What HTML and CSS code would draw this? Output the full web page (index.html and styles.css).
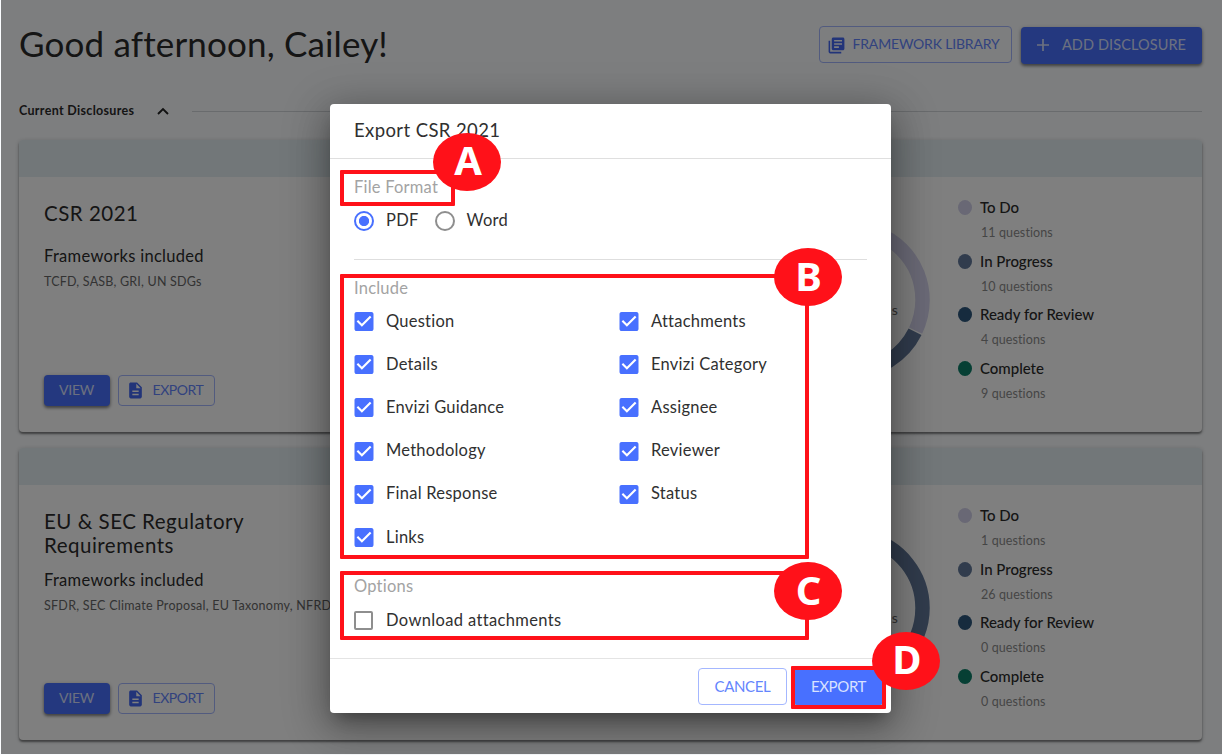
FILE: index.html
```html
<!DOCTYPE html>
<html lang="en">
<head>
<meta charset="utf-8">
<title>Disclosures</title>
<link rel="stylesheet" href="styles.css">
</head>
<body>
<svg class="defs" width="0" height="0">
  <symbol id="library" viewBox="0 0 24 24"><path d="M4 6H2v14c0 1.100.9 2 2 2h14v-2H4V6zm16-4H8c-1.100 0-2 .9-2 2v12c0 1.100.9 2 2 2h12c1.100 0 2-.9 2-2V4c0-1.100-.9-2-2-2zm-1 9H9V9h10v2zm-4 4H9v-2h6v2zm4-8H9V5h10v2z"/></symbol>
  <symbol id="doc" viewBox="0 0 24 24"><path d="M14 2H6c-1.100 0-2 .9-2 2v16c0 1.100.9 2 2 2h12c1.100 0 2-.9 2-2V8l-6-6zm2 16H8v-2h8v2zm0-4H8v-2h8v2zm-3-5V3.500L18.500 9H13z"/></symbol>
  <symbol id="check" viewBox="3 3 18 18"><path d="M19 3H5c-1.110 0-2 .9-2 2v14c0 1.100.89 2 2 2h14c1.110 0 2-.9 2-2V5c0-1.100-.89-2-2-2zm-9 14l-5-5 1.410-1.410L10 14.170l7.590-7.590L19 8l-9 9z"/></symbol>
</svg>

<main class="page">
  <header class="top">
    <h1 class="greeting">Good afternoon, Cailey!</h1>
    <button class="btn outlined library"><svg class="icon17"><use href="#library"/></svg><span>FRAMEWORK LIBRARY</span></button>
    <button class="btn filled add"><svg class="plus" viewBox="0 0 12 12"><path d="M6 0v12M0 6h12"/></svg><span>ADD DISCLOSURE</span></button>
  </header>

  <div class="section">
    <span class="section-name">Current Disclosures</span>
    <svg class="chevron" viewBox="0 0 12 8"><path d="M1 7l5-5 5 5"/></svg>
    <span class="rule"></span>
  </div>

  <section class="card">
    <div class="card-bar"></div>
    <div class="card-body">
      <div class="info">
        <h2 class="card-title">CSR 2021</h2>
        <h3 class="sub">Frameworks included</h3>
        <p class="list">TCFD, SASB, GRI, UN SDGs</p>
        <div class="actions">
          <button class="btn filled view">VIEW</button>
          <button class="btn outlined export"><svg class="icon17"><use href="#doc"/></svg><span>EXPORT</span></button>
        </div>
      </div>
      <div class="donut">
        <svg viewBox="0 0 158 158" class="ring">
          <circle class="todo" cx="79" cy="79" r="71.500" pathLength="34" stroke-dasharray="10.900 23.100"/>
          <circle class="progress" cx="79" cy="79" r="71.500" pathLength="34" stroke-dasharray="9.900 24.100" stroke-dashoffset="-11"/>
          <circle class="review" cx="79" cy="79" r="71.500" pathLength="34" stroke-dasharray="3.900 30.100" stroke-dashoffset="-21"/>
          <circle class="complete" cx="79" cy="79" r="71.500" pathLength="34" stroke-dasharray="8.900 25.100" stroke-dashoffset="-25"/>
        </svg>
        <div class="donut-text"><b>34</b><span>total questions</span></div>
      </div>
      <ul class="legend">
        <li><i class="dot todo"></i><b>To Do</b><small>11 questions</small></li>
        <li><i class="dot progress"></i><b>In Progress</b><small>10 questions</small></li>
        <li><i class="dot review"></i><b>Ready for Review</b><small>4 questions</small></li>
        <li><i class="dot complete"></i><b>Complete</b><small>9 questions</small></li>
      </ul>
    </div>
  </section>

  <section class="card">
    <div class="card-bar"></div>
    <div class="card-body">
      <div class="info">
        <h2 class="card-title">EU &amp; SEC Regulatory<br>Requirements</h2>
        <h3 class="sub">Frameworks included</h3>
        <p class="list wide">SFDR, SEC Climate Proposal, EU Taxonomy, NFRD</p>
        <div class="actions">
          <button class="btn filled view">VIEW</button>
          <button class="btn outlined export"><svg class="icon17"><use href="#doc"/></svg><span>EXPORT</span></button>
        </div>
      </div>
      <div class="donut">
        <svg viewBox="0 0 158 158" class="ring">
          <circle class="todo" cx="79" cy="79" r="71.500" pathLength="27" stroke-dasharray="0.900 26.100"/>
          <circle class="progress" cx="79" cy="79" r="71.500" pathLength="27" stroke-dasharray="25.900 1.100" stroke-dashoffset="-1"/>
        </svg>
        <div class="donut-text"><b>27</b><span>total questions</span></div>
      </div>
      <ul class="legend">
        <li><i class="dot todo"></i><b>To Do</b><small>1 questions</small></li>
        <li><i class="dot progress"></i><b>In Progress</b><small>26 questions</small></li>
        <li><i class="dot review"></i><b>Ready for Review</b><small>0 questions</small></li>
        <li><i class="dot complete"></i><b>Complete</b><small>0 questions</small></li>
      </ul>
    </div>
  </section>
</main>

<div class="backdrop"></div>

<div class="dialog" role="dialog">
  <h2 class="dialog-title">Export CSR 2021</h2>
  <div class="dialog-body">
    <h4 class="group">File Format</h4>
    <div class="radios">
      <label class="option"><i class="radio on"></i><span>PDF</span></label>
      <label class="option"><i class="radio"></i><span>Word</span></label>
    </div>
    <hr class="divider">
    <h4 class="group">Include</h4>
    <div class="checks">
      <label class="option"><svg class="box"><use href="#check"/></svg><span>Question</span></label>
      <label class="option"><svg class="box"><use href="#check"/></svg><span>Attachments</span></label>
      <label class="option"><svg class="box"><use href="#check"/></svg><span>Details</span></label>
      <label class="option"><svg class="box"><use href="#check"/></svg><span>Envizi Category</span></label>
      <label class="option"><svg class="box"><use href="#check"/></svg><span>Envizi Guidance</span></label>
      <label class="option"><svg class="box"><use href="#check"/></svg><span>Assignee</span></label>
      <label class="option"><svg class="box"><use href="#check"/></svg><span>Methodology</span></label>
      <label class="option"><svg class="box"><use href="#check"/></svg><span>Reviewer</span></label>
      <label class="option"><svg class="box"><use href="#check"/></svg><span>Final Response</span></label>
      <label class="option"><svg class="box"><use href="#check"/></svg><span>Status</span></label>
      <label class="option"><svg class="box"><use href="#check"/></svg><span>Links</span></label>
    </div>
    <h4 class="group options">Options</h4>
    <label class="option download"><i class="box empty"></i><span>Download attachments</span></label>
  </div>
  <footer class="dialog-actions">
    <button class="btn outlined big">CANCEL</button>
    <button class="btn filled big">EXPORT</button>
  </footer>
</div>

<div class="frame frame-a"></div><div class="mark mark-a">A</div>
<div class="frame frame-b"></div><div class="mark mark-b">B</div>
<div class="frame frame-c"></div><div class="mark mark-c">C</div>
<div class="frame frame-d"></div><div class="mark mark-d">D</div>
</body>
</html>
```
FILE: styles.css
```css
* { box-sizing: border-box; margin: 0; padding: 0; }
body {
  position: relative;
  width: 1222px;
  height: 755px;
  overflow: hidden;
  background: #fbfdff;
  color: #2b2b2b;
  font-family: Lato, "Open Sans", sans-serif;
}
.defs { position: absolute; }
.page { padding: 26px 20px 0 19px; }

/* Buttons */
.btn {
  display: flex;
  align-items: center;
  justify-content: center;
  border: 0;
  border-radius: 4px;
  font: 400 14px/20px Lato, "Open Sans", sans-serif;
  white-space: nowrap;
}
.filled { background: #4870ff; color: #d8e1ff; box-shadow: 0 2px 3px rgba(0,0,0,.4), 0 1px 5px rgba(0,0,0,.2); }
.outlined { background: none; border: 1px solid #a4b7ff; color: #6485fd; }
.icon17 { width: 19px; height: 19px; fill: #4469f2; }

/* Header */
.top { display: flex; height: 38px; }
.greeting { flex: 1; font-size: 35px; font-weight: 400; line-height: 35px; letter-spacing: .16px; }
.library { width: 193px; height: 37px; gap: 7px; letter-spacing: -.18px; padding: 0 5px 1px 0; }
.library .icon17 { margin-top: 2px; }
.add { width: 181px; height: 37px; margin: 1px 0 0 9px; gap: 13px; padding-bottom: 1px; font-size: 14.500px; letter-spacing: .1px; }
.plus { width: 12px; height: 12px; stroke: #d8e1ff; stroke-width: 1.700; }

/* Section heading */
.section { display: flex; align-items: center; height: 20px; margin-top: 37px; }
.section-name { width: 138px; padding-bottom: 2px; font-size: 12.500px; font-weight: 700; letter-spacing: .32px; }
.chevron { width: 12px; height: 8px; fill: none; stroke: #222; stroke-width: 1.900; }
.rule { flex: 1; height: 1px; margin-left: 23px; background: #d3d6da; }

/* Cards */
.card {
  height: 292px;
  margin-top: 19px;
  border-radius: 4px;
  overflow: hidden;
  background: #fff;
  box-shadow: 0 2px 2px rgba(0,0,0,.42), 0 1px 5px rgba(0,0,0,.2);
}
.card + .card { margin-top: 16px; }
.card-bar { height: 37px; background: #e4eef3; }
.card-body { display: flex; height: 255px; padding-left: 25px; }
.info { display: flex; flex-direction: column; width: 728px; padding: 24px 0 26px; }
.card-title { min-height: 32px; font-size: 20.500px; font-weight: 400; line-height: 24px; letter-spacing: .5px; }
.sub { margin-top: 11px; font-size: 16.500px; font-weight: 400; line-height: 24px; letter-spacing: .3px; }
.list { margin-top: 4px; color: #666; font-size: 12.500px; line-height: 20px; letter-spacing: .2px; }
.list.wide { letter-spacing: .26px; }
.actions { display: flex; gap: 8px; margin-top: auto; }
.view { width: 66px; height: 31px; padding: 0 1px 1px 0; letter-spacing: -.3px; }
.export { width: 97px; height: 31px; gap: 8px; letter-spacing: -.45px; padding: 0 4px 1px 0; }

.donut { position: relative; width: 158px; padding-top: 44px; }
.ring { display: block; width: 158px; height: 158px; transform: rotate(-90deg); fill: none; stroke-width: 14.500; }
.ring .todo { stroke: #d6d5ee; }
.ring .progress { stroke: #62799b; }
.ring .review { stroke: #2c567c; }
.ring .complete { stroke: #0c7f69; }
.donut-text { position: absolute; left: 0; top: 98px; width: 158px; text-align: center; color: #666; font-size: 14px; letter-spacing: .2px; }
.donut-text b { display: block; font-size: 24px; font-weight: 400; line-height: 26px; }
.legend { margin-left: 28px; padding-top: 20px; list-style: none; }
.legend li { display: grid; grid-template-columns: 22px auto; grid-template-rows: 22px 31.500px; align-items: center; }
.legend b { padding-bottom: 2px; font-size: 15px; font-weight: 500; line-height: 20px; letter-spacing: -.02px; }
.legend small { grid-column: 2; align-self: start; padding: 5px 0 0 1px; color: #8b8b8b; font-size: 12.500px; line-height: 18px; letter-spacing: .1px; }
.dot { width: 14px; height: 15px; margin-top: -1px; border-radius: 50%; }
.dot.todo { background: #d2d1ea; }
.dot.progress { background: #62799b; }
.dot.review { background: #2c567c; }
.dot.complete { background: #0c7f69; }

.backdrop { position: absolute; inset: 0 0 1px 1px; background: rgba(0,0,0,.5); }

/* Dialog */
.dialog {
  position: absolute;
  left: 330px;
  top: 104px;
  display: flex;
  flex-direction: column;
  width: 561px;
  height: 609px;
  border-radius: 4px;
  background: #fff;
  box-shadow: 0 11px 15px -7px rgba(0,0,0,.3), 0 12px 38px 3px rgba(0,0,0,.24), 0 9px 46px 8px rgba(0,0,0,.16);
  color: #303030;
}
.dialog-title { height: 55px; padding-left: 24px; border-bottom: 1px solid #dfdfdf; font-size: 18.500px; font-weight: 400; line-height: 52px; letter-spacing: .4px; }
.dialog-body { flex: 1; padding: 16px 24px 0; }
.group { height: 25px; color: #a3a3a3; font-size: 16.500px; font-weight: 400; line-height: 24px; letter-spacing: .22px; }
.radios { display: flex; gap: 16px; height: 42px; }
.option { display: flex; align-items: center; gap: 12px; font-size: 16.500px; letter-spacing: .24px; }
.option span { padding-bottom: 2px; }
.radio { width: 20px; height: 20px; border: 2px solid #8e8e8e; border-radius: 50%; }
.radio.on { border-color: #4870ff; background: radial-gradient(circle, #4870ff 4.700px, transparent 5.500px); }
.divider { height: 1px; margin: 17px 0 16px; border: 0; background: #dedede; }
.checks { display: grid; grid-template-columns: 265px 1fr; grid-auto-rows: 43.200px; margin-top: -1px; }
.box { width: 20px; height: 19px; fill: #4870ff; }
.box.empty { width: 19px; margin-right: 1px; border: 2px solid #8e8e8e; border-radius: 2px; }
.options { margin-top: 15px; }
.download { height: 43px; letter-spacing: .36px; }
.dialog-actions { display: flex; justify-content: flex-end; gap: 7px; height: 55px; padding: 9px 8px 0; border-top: 1px solid #e4e4e4; }
.big { width: 89px; height: 37px; padding-bottom: 1px; font-size: 15px; letter-spacing: -.35px; }

/* Callouts */
.frame { position: absolute; border: 4px solid #ff1119; border-radius: 1px; }
.frame-a { left: 340px; top: 170px; width: 115px; height: 36px; }
.frame-b { left: 340px; top: 274px; width: 469px; height: 285px; }
.frame-c { left: 340px; top: 571px; width: 469px; height: 69px; }
.frame-d { left: 791px; top: 666px; width: 95px; height: 43px; }
.mark {
  position: absolute;
  width: 68px;
  height: 58px;
  border-radius: 50%;
  background: #ff1119;
  color: #fff;
  font: 700 40px/56px "Noto Sans", sans-serif;
  text-align: center;
  padding-left: 2px;
}
.mark-a { left: 433px; top: 132.500px; line-height: 53px; }
.mark-b { left: 773.500px; top: 248px; }
.mark-c { left: 773.500px; top: 562px; }
.mark-d { left: 872px; top: 631.500px; line-height: 54px; }
```
